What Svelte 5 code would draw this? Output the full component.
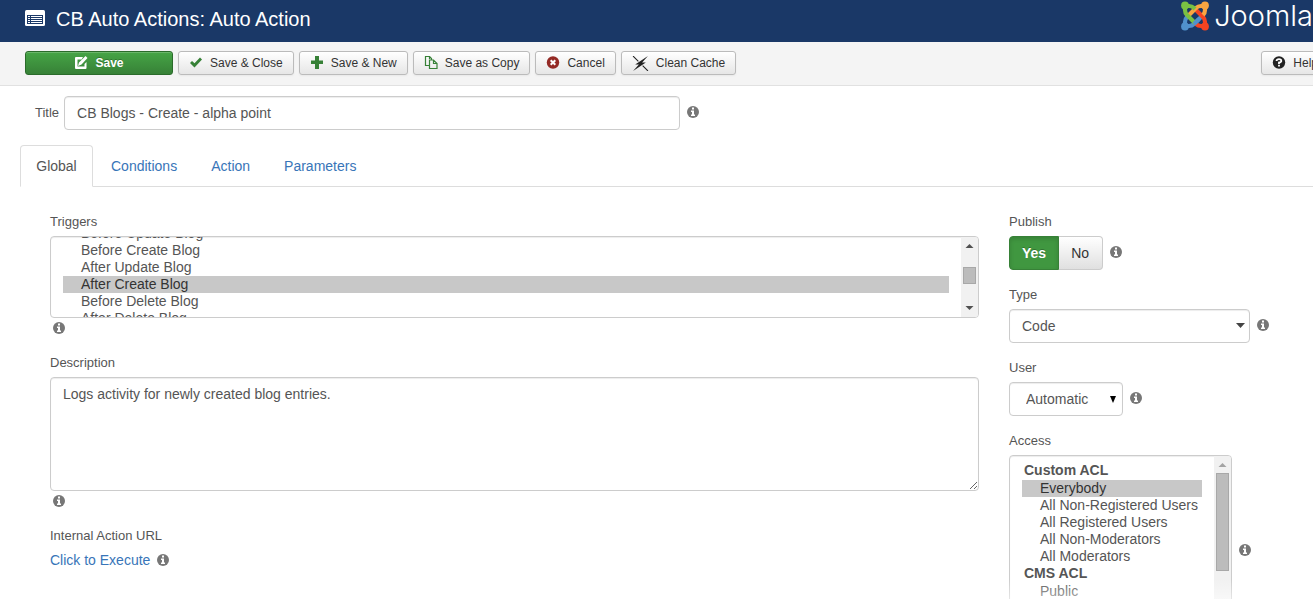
<script lang="ts">
  import { onMount } from 'svelte';

  const tabs = ['Global', 'Conditions', 'Action', 'Parameters'];
  const triggers = [
    'Before Update Blog',
    'Before Create Blog',
    'After Update Blog',
    'After Create Blog',
    'Before Delete Blog',
    'After Delete Blog'
  ];
  const accessGroups = [
    {
      label: 'Custom ACL',
      options: [
        'Everybody',
        'All Non-Registered Users',
        'All Registered Users',
        'All Non-Moderators',
        'All Moderators'
      ]
    },
    { label: 'CMS ACL', options: ['Public'] }
  ];

  let activeTab = $state('Global');
  let title = $state('CB Blogs - Create - alpha point');
  let description = $state('Logs activity for newly created blog entries.');
  let selectedTriggers = $state(['After Create Blog']);
  let selectedAccess = $state(['Everybody']);
  let publish = $state('yes');
  let triggerList: HTMLSelectElement;

  onMount(() => {
    requestAnimationFrame(() => {
      triggerList.scrollTop = 18;
    });
  });
</script>

{#snippet info()}
  <svg class="info" viewBox="0 0 12 12" aria-hidden="true">
    <circle cx="6" cy="6" r="6" fill="#777" />
    <path fill="#fff" d="M4 4.500h3v4h1V10H4V8.500h1V6H4zM5 1.500h2v2H5z" />
  </svg>
{/snippet}

<div class="page">
  <header class="header">
    <svg class="header-icon" viewBox="0 0 20 16" aria-hidden="true">
      <rect width="20" height="16" rx="1.500" fill="#fff" />
      <path fill="#1a3867" d="M2 5h16v9H2z" />
      <path fill="#fff" d="M3 6h2v1H3zm3 0h11v1H6zM3 8h2v1H3zm3 0h11v1H6zm-3 2h2v1H3zm3 0h11v1H6zm-3 2h2v1H3zm3 0h11v1H6z" />
    </svg>
    <h1>CB Auto Actions: Auto Action</h1>
    <div class="brand">
      <svg viewBox="0 0 28 30" aria-hidden="true">
        <g fill="none" stroke-width="4.200">
          <path stroke="#5091cd" d="M4 25v-4q0-3 2-5M4 25h4q3 0 5-2l8-8" />
          <path stroke="#f44321" d="M24 25h-4q-3 0-5-2M24 25v-4q0-3-2-5l-8-8" />
          <path stroke="#f9a541" d="M24 5v4q0 3-2 5M24 5h-4q-3 0-5 2l-8 8" />
          <path stroke="#7ac143" d="M4 5h4q3 0 5 2l1 1M4 5v4q0 3 2 5l8 8" />
          <path stroke="#5091cd" d="M13 23l5-5" />
        </g>
        <circle cx="4" cy="4.500" r="3.900" fill="#7ac143" />
        <circle cx="24" cy="4.500" r="3.900" fill="#f9a541" />
        <circle cx="24" cy="25.500" r="3.900" fill="#f44321" />
        <circle cx="4" cy="25.500" r="3.900" fill="#5091cd" />
      </svg>
      <span>Joomla</span>
    </div>
  </header>

  <div class="toolbar">
    <button type="button" class="btn save">
      <svg viewBox="0 0 14 14" aria-hidden="true">
        <path fill="#fff" fill-rule="evenodd" d="M2 1h7L7.500 3.500H3.500v7h7V8l2-2v6q0 1-1 1H2q-1 0-1-1V2q0-1 1-1zM11.500 0l2 2-6 6.500-3.500 1.500 1-3.500z" />
      </svg>
      Save
    </button>
    <button type="button" class="btn">
      <svg viewBox="0 0 14 14" aria-hidden="true">
        <path fill="#378137" d="M1 7l2-2 2.500 2.300L11 1.500l2 2L5.500 11.500z" />
      </svg>
      Save &amp; Close
    </button>
    <button type="button" class="btn">
      <svg viewBox="0 0 14 14" aria-hidden="true">
        <path fill="#378137" d="M5 0h4v4.500h4V8H9v5H5V8H1V4.500h4z" />
      </svg>
      Save &amp; New
    </button>
    <button type="button" class="btn">
      <svg viewBox="0 0 14 14" aria-hidden="true">
        <path fill="none" stroke="#378137" stroke-width="1.200" d="M5 9.500H1.500v-9h4l2 2V4M5.500.500v2.500M5.500 4h4l3.500 3.500v5H5.500zM9.500 4v3.500H13" />
      </svg>
      Save as Copy
    </button>
    <button type="button" class="btn">
      <svg viewBox="0 0 14 14" aria-hidden="true">
        <circle cx="7" cy="6.500" r="6.200" fill="#942a25" />
        <path stroke="#fff" stroke-width="2" d="M4.700 4.200l4.600 4.600M9.300 4.200L4.700 8.800" />
      </svg>
      Cancel
    </button>
    <button type="button" class="btn">
      <svg class="wide" viewBox="0 0 16 14" aria-hidden="true">
        <path fill="#222" d="M15 0L9.500 6h3.500L1 14l5.500-6H3z" />
        <path stroke="#222" d="M1 0l5 5M10 9l5 5" />
      </svg>
      Clean Cache
    </button>
    <button type="button" class="btn help">
      <svg viewBox="0 0 14 14" aria-hidden="true">
        <circle cx="7" cy="6.500" r="6.200" fill="#222" />
        <path fill="none" stroke="#fff" stroke-width="1.800" d="M4.500 5Q4.700 3.200 7 3.200t2.300 1.700Q9.300 6.100 7 6.500V8M7 8.800v1.700" />
      </svg>
      Help
    </button>
  </div>

  <div class="title-row">
    <label for="title">Title</label>
    <input id="title" type="text" bind:value={title} />
    {@render info()}
  </div>

  <div class="tabs" role="tablist">
    {#each tabs as tab}
      <button
        type="button"
        role="tab"
        class="tab"
        class:active={tab === activeTab}
        aria-selected={tab === activeTab}
        onclick={() => (activeTab = tab)}
      >
        {tab}
      </button>
    {/each}
  </div>

  <main class="content">
    <div class="column">
      <div class="group">
        <label for="triggers">Triggers</label>
        <div class="listbox triggers">
          <select id="triggers" multiple bind:value={selectedTriggers} bind:this={triggerList}>
            {#each triggers as trigger}
              <option value={trigger}>{trigger}</option>
            {/each}
          </select>
          <div class="scrollbar" aria-hidden="true">
            <svg viewBox="0 0 17 17"><path fill="#505050" d="M4.500 11l4-4 4 4z" /></svg>
            <i class="thumb short"></i>
            <svg class="down" viewBox="0 0 17 17"><path fill="#505050" d="M4.500 6l4 4 4-4z" /></svg>
          </div>
        </div>
        <div class="hint">{@render info()}</div>
      </div>

      <div class="group">
        <label for="description">Description</label>
        <textarea id="description" bind:value={description}></textarea>
        <div class="hint">{@render info()}</div>
      </div>

      <div class="group">
        <span class="caption">Internal Action URL</span>
        <div class="control">
          <a href="#execute">Click to Execute</a>
          {@render info()}
        </div>
      </div>
    </div>

    <div class="column">
      <fieldset class="group">
        <legend>Publish</legend>
        <div class="control">
          <div class="switch">
            <label class="yes">
              <input type="radio" name="publish" value="yes" bind:group={publish} />Yes
            </label>
            <label>
              <input type="radio" name="publish" value="no" bind:group={publish} />No
            </label>
          </div>
          {@render info()}
        </div>
      </fieldset>

      <div class="group">
        <label for="type">Type</label>
        <div class="control">
          <div class="dropdown type">
            <select id="type"><option>Code</option></select>
            <svg viewBox="0 0 9 5" aria-hidden="true"><path fill="#444" d="M0 0h9L4.500 5z" /></svg>
          </div>
          {@render info()}
        </div>
      </div>

      <div class="group">
        <label for="user">User</label>
        <div class="control">
          <div class="dropdown user">
            <select id="user"><option>Automatic</option></select>
            <svg viewBox="0 0 6 7" aria-hidden="true"><path fill="#000" d="M0 0h6L3 7z" /></svg>
          </div>
          {@render info()}
        </div>
      </div>

      <div class="group">
        <label for="access">Access</label>
        <div class="control">
          <div class="listbox access">
            <select id="access" multiple bind:value={selectedAccess}>
              {#each accessGroups as group}
                <optgroup label={group.label}>
                  {#each group.options as option}
                    <option value={option}>{option}</option>
                  {/each}
                </optgroup>
              {/each}
            </select>
            <div class="scrollbar" aria-hidden="true">
              <svg viewBox="0 0 17 17"><path fill="#a3a3a3" d="M4.500 11l4-4 4 4z" /></svg>
              <i class="thumb long"></i>
            </div>
          </div>
          {@render info()}
        </div>
      </div>
    </div>
  </main>
</div>

<style>
  :global(body) {
    margin: 0;
  }

  .page {
    position: relative;
    height: 100vh;
    overflow: hidden;
    background: #fff;
    color: #555;
    font-family: 'Liberation Sans', Arial, sans-serif;
    font-size: 14px;
    line-height: 20px;
  }

  .page::after {
    content: '';
    position: absolute;
    right: 0;
    bottom: 0;
    left: 0;
    height: 20px;
    background: linear-gradient(rgba(255, 255, 255, 0), rgba(255, 255, 255, 0.5));
    pointer-events: none;
  }

  button,
  input,
  select,
  textarea {
    box-sizing: border-box;
    margin: 0;
    color: inherit;
    font: inherit;
  }

  .header {
    display: flex;
    align-items: center;
    height: 42px;
    padding-left: 25px;
    background: #1a3867;
    color: #fff;
  }

  .header-icon {
    width: 20px;
    height: 16px;
    margin: 0 11px 6px 0;
  }

  h1 {
    margin: 0 0 4px;
    font-size: 20px;
    font-weight: 400;
    line-height: 24px;
    white-space: nowrap;
  }

  .brand {
    display: flex;
    flex: none;
    align-items: center;
    gap: 5px;
    margin: 0 0 10px auto;
    font-family: Inter, sans-serif;
    font-size: 29px;
    font-weight: 300;
  }

  .brand svg {
    width: 28px;
    height: 30px;
  }

  .toolbar {
    display: flex;
    align-items: center;
    gap: 5px;
    padding: 9px 0 10px 25px;
    border-bottom: 1px solid #e1e1e1;
    background: #f4f4f4;
  }

  .btn {
    display: flex;
    flex: none;
    align-items: center;
    justify-content: center;
    gap: 7px;
    height: 24px;
    padding: 0 10px;
    border: 1px solid #bbb;
    border-radius: 3px;
    background: linear-gradient(#fff, #e6e6e6);
    box-shadow: inset 0 1px 0 #fff, 0 1px 2px rgba(0, 0, 0, 0.05);
    color: #333;
    font-size: 12px;
    white-space: nowrap;
  }

  .btn svg {
    width: 14px;
    height: 14px;
  }

  .btn svg.wide {
    width: 17px;
    height: 15px;
  }

  .save {
    width: 148px;
    border-color: #2b6b2b;
    background: linear-gradient(#46a546, #378137);
    box-shadow: inset 0 1px 0 rgba(255, 255, 255, 0.2);
    color: #fff;
    font-weight: 700;
    text-shadow: 0 -1px 0 rgba(0, 0, 0, 0.25);
  }

  .help {
    margin: 0 -16px 0 auto;
  }

  .info {
    flex: none;
    width: 12px;
    height: 12px;
  }

  .title-row {
    display: flex;
    align-items: center;
    padding: 10px 0 15px 35px;
  }

  label,
  legend,
  .caption {
    font-size: 13px;
    line-height: 20px;
  }

  #title {
    width: calc(50% - 23px);
    height: 34px;
    margin: 0 7px 0 5px;
    padding: 6px 12px;
  }

  #title,
  textarea,
  .listbox,
  .dropdown select {
    border: 1px solid #ccc;
    border-radius: 4px;
    background: #fff;
    box-shadow: inset 0 1px 1px rgba(0, 0, 0, 0.075);
  }

  .tabs {
    display: flex;
    gap: 2px;
    margin-left: 20px;
    border-bottom: 1px solid #ddd;
  }

  .tab {
    height: 42px;
    margin-bottom: -1px;
    padding: 0 15px;
    border: 1px solid transparent;
    border-radius: 4px 4px 0 0;
    background: none;
    color: #3875b8;
  }

  .tab.active {
    min-width: 73px;
    border-color: #ddd;
    border-bottom-color: #fff;
    background: #fff;
    color: #555;
  }

  .content {
    display: grid;
    grid-template-columns: minmax(0, 1fr) 304px;
    gap: 30px;
    padding: 25px 0 0 50px;
  }

  .group {
    min-width: 0;
    margin: 0 0 15px;
    padding: 0;
    border: 0;
  }

  .group > label,
  .group > legend,
  .caption {
    display: block;
    margin-bottom: 4px;
    padding: 0;
  }

  .control {
    display: flex;
    align-items: center;
    gap: 7px;
  }

  .switch + .info,
  .dropdown + .info,
  #title + .info {
    margin-bottom: 2px;
  }

  .hint {
    display: flex;
    align-items: center;
    height: 20px;
    padding-left: 3px;
  }

  .listbox {
    display: flex;
    box-sizing: border-box;
    overflow: hidden;
  }

  .listbox select {
    flex: 1;
    min-width: 0;
    height: 100%;
    padding: 6px 12px;
    border: 0;
    outline: 0;
    background: transparent;
    scrollbar-width: none;
  }

  .listbox option {
    box-sizing: border-box;
    height: 17px;
    min-height: 17px;
    padding: 0 2px 0 18px;
    line-height: 17px;
  }

  .listbox option:checked {
    background: linear-gradient(#c8c8c8, #c8c8c8);
    -webkit-text-fill-color: #333;
  }

  .triggers {
    height: 82px;
  }

  .access {
    width: 223px;
    height: 190px;
  }

  .scrollbar {
    display: flex;
    flex-direction: column;
    width: 17px;
    background: #f1f1f1;
  }

  .scrollbar svg {
    width: 17px;
    height: 17px;
  }

  .down {
    margin-top: auto;
  }

  .thumb {
    box-sizing: border-box;
    margin: 0 2px;
    border: 1px solid #a8a8a8;
    background: #bcbcbc;
  }

  .short {
    height: 17px;
    margin-top: 13px;
  }

  .long {
    height: 98px;
  }

  textarea {
    display: block;
    width: 100%;
    height: 114px;
    padding: 6px 12px;
    resize: vertical;
  }

  a {
    color: #3875b8;
    text-decoration: none;
  }

  .switch {
    display: flex;
  }

  .switch label {
    box-sizing: border-box;
    min-width: 44px;
    height: 34px;
    padding: 6px 12px;
    border: 1px solid #ccc;
    border-left: 0;
    border-radius: 0 4px 4px 0;
    background: linear-gradient(#fff, #e0e0e0);
    color: #333;
    font-size: 14px;
  }

  .switch label.yes {
    border: 1px solid #378137;
    border-radius: 4px 0 0 4px;
    background: #409740;
    box-shadow: inset 0 2px 4px rgba(0, 0, 0, 0.15);
    color: #fff;
    font-weight: 700;
    text-shadow: 0 -1px 0 rgba(0, 0, 0, 0.25);
  }

  .switch input {
    position: absolute;
    opacity: 0;
  }

  .dropdown {
    position: relative;
  }

  .dropdown select {
    display: block;
    width: 100%;
    height: 34px;
    padding: 6px 12px;
    appearance: none;
  }

  .dropdown svg {
    position: absolute;
    top: 14px;
    right: 5px;
    width: 9px;
    height: 5px;
    pointer-events: none;
  }

  .type {
    width: 241px;
  }

  .user {
    width: 114px;
  }

  .user select {
    padding-left: 16px;
  }

  .dropdown.user svg {
    right: 7px;
    width: 6px;
    height: 7px;
  }
</style>
